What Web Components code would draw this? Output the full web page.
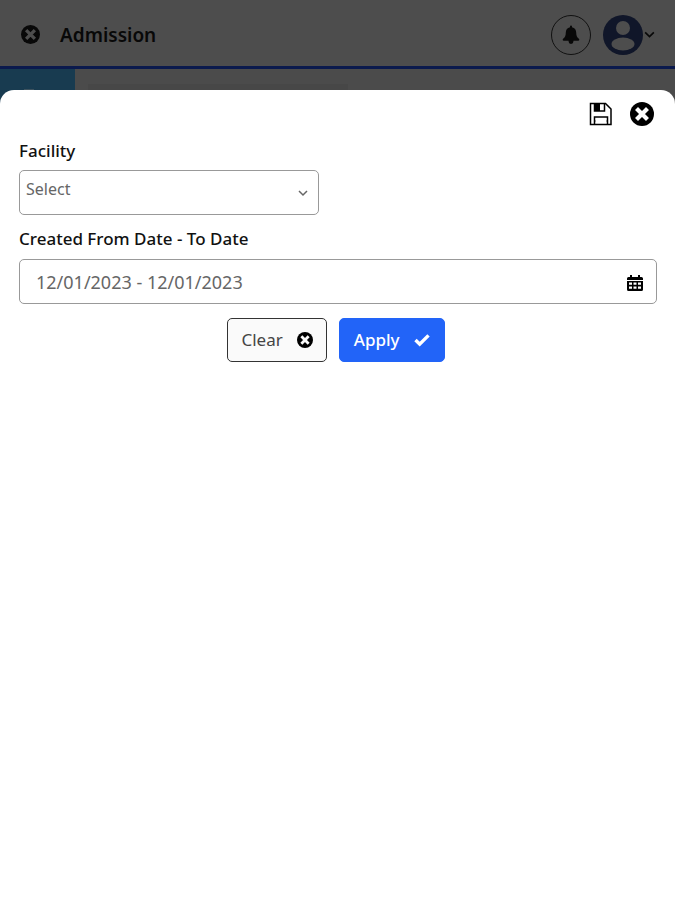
<!DOCTYPE html>
<html lang="en">
<head>
<meta charset="utf-8">
<meta name="viewport" content="width=device-width, initial-scale=1">
<title>Admission</title>
<style>
html, body { height: 100%; }
body { margin: 0; background: #4d4d4d; font-family: "Noto Sans", "Open Sans", sans-serif; font-size: 17px; line-height: 24px; color: #161616; }
</style>
</head>
<body>
<admission-page></admission-page>
<script>
const icons = {
  close: '<svg viewBox="0 0 24 24" aria-hidden="true"><circle cx="12" cy="12" r="12" fill="currentColor"/><path d="M8 8l8 8M16 8l-8 8" fill="none" stroke="var(--mark, #fff)" stroke-width="4.200" stroke-linecap="square"/></svg>',
  bell: '<svg viewBox="0 0 20 20" aria-hidden="true"><path fill="currentColor" d="M9 1.500a1 1 0 0 1 2 0v.7c2.700.5 4.200 2.600 4.200 5.300 0 3.600 1 5.100 2.700 6.300.8.800.4 1.900-.6 1.900H2.700c-1 0-1.400-1.100-.6-1.900C3.800 12.600 4.800 11.100 4.800 7.500 4.800 4.800 6.300 2.700 9 2.200zM7.600 15.500h4.800v1a2.400 2.400 0 0 1-4.800 0z"/></svg>',
  user: '<svg viewBox="0 0 40 40" aria-hidden="true"><circle cx="20" cy="20" r="20" fill="#101629"/><circle cx="20" cy="13" r="7" fill="#4d4d4d"/><ellipse cx="20" cy="29" rx="11.500" ry="6.500" fill="#4d4d4d"/></svg>',
  chevron: '<svg viewBox="0 0 12 12" aria-hidden="true"><path d="M2 4l4 4 4-4" fill="none" stroke="currentColor" stroke-width="1.500"/></svg>',
  save: '<svg viewBox="0 0 24 24" aria-hidden="true" fill="none" stroke="currentColor" stroke-width="1.500"><path d="M1.500 1.500h15l5.500 5.500V22.500H1.500z"/><path d="M5.500 1.500V9h10V1.500M5.500 22.500v-7.500h13V22.500M5.500 19h1M17.500 19h1"/><path d="M5.500 1.500h5.500V9H5.500z" fill="currentColor" stroke="none"/></svg>',
  calendar: '<svg viewBox="0 0 16 16" aria-hidden="true"><path fill="currentColor" fill-rule="evenodd" d="M3 0h2v2h6V0h2v2h1.500A1.500 1.500 0 0 1 16 3.500V5H0V3.500A1.500 1.500 0 0 1 1.500 2H3zM0 6h16v8.500a1.500 1.500 0 0 1-1.500 1.500h-13A1.500 1.500 0 0 1 0 14.500zM2 7.500v2.300h3v-2.300zM6.500 7.500v2.300h3v-2.300zM11 7.500v2.300h3v-2.300zM2 11.500v2.300h3v-2.300zM6.500 11.500v2.300h3v-2.300zM11 11.500v2.300h3v-2.300z"/></svg>',
  check: '<svg viewBox="0 0 16 16" aria-hidden="true"><path d="M1.500 8l4.200 4.200L14.500 3.400" fill="none" stroke="currentColor" stroke-width="3.400"/></svg>'
};
const build = (host, html) => {
  const t = document.createElement('template');
  t.innerHTML = html;
  host.attachShadow({ mode: 'open' }).append(t.content.cloneNode(true));
};

customElements.define('ui-icon', class extends HTMLElement {
  static observedAttributes = ['name'];
  constructor() {
    super();
    build(this, '<style>:host{display:block;flex:none;width:var(--size,16px);height:var(--size,16px)}svg{display:block;width:100%;height:100%}</style><span></span>');
  }
  attributeChangedCallback(_, old, name) { this.shadowRoot.querySelector('span').innerHTML = icons[name] || ''; }
});

const reset = '*{box-sizing:border-box}button{font:inherit;color:inherit;background:none;border:0;padding:0;margin:0;cursor:pointer}';

customElements.define('page-header', class extends HTMLElement {
  constructor() {
    super();
    build(this, `<style>${reset}
      :host{display:block;color:#080808;--mark:#4d4d4d}
      header{display:flex;align-items:center;height:69px;padding:3px 19px 0 21px;border-bottom:3px solid #0b1a4d}
      .close{--size:19px}
      h1{flex:1;margin:0 0 0 20px;font-size:19px;line-height:24px;font-weight:600}
      .bell{display:grid;place-items:center;width:40px;height:40px;border:1px solid #111;border-radius:50%;--size:20px}
      .user{display:flex;align-items:center;margin-left:12px}
      .avatar{--size:40px}.arrow{--size:13px}
    </style>
    <header>
      <button class="close" aria-label="Close page"><ui-icon name="close"></ui-icon></button>
      <h1><slot></slot></h1>
      <button class="bell" aria-label="Notifications"><ui-icon name="bell"></ui-icon></button>
      <button class="user" aria-label="Account"><ui-icon class="avatar" name="user"></ui-icon><ui-icon class="arrow" name="chevron"></ui-icon></button>
    </header>`);
  }
});

customElements.define('action-button', class extends HTMLElement {
  static observedAttributes = ['icon'];
  constructor() {
    super();
    build(this, `<style>${reset}
      :host{display:block}
      button{display:flex;align-items:center;gap:14px;height:44px;padding:0 13px;border:1px solid #333;border-radius:5px;background:#fafafa;color:#444}
      ui-icon{color:#000;--mark:#fafafa}
      :host([primary]) button{padding:0 14px;background:#2264f8;border-color:#2264f8;color:#fff;font-weight:500}
      :host([primary]) ui-icon{color:#fff}
    </style><button type="button"><slot></slot><ui-icon></ui-icon></button>`);
  }
  attributeChangedCallback(_, old, name) { this.shadowRoot.querySelector('ui-icon').setAttribute('name', name); }
});

customElements.define('facility-field', class extends HTMLElement {
  constructor() {
    super();
    build(this, `<style>${reset}
      :host{display:block}
      label{display:block;margin-bottom:7px;font-weight:500;color:#111}
      .box{position:relative;width:47%;min-width:200px}
      select{display:block;appearance:none;width:100%;height:45px;padding:0 32px 8px 6px;border:1px solid #999;border-radius:5px;background:#fff;color:#666;font:inherit;font-size:16px}
      ui-icon{position:absolute;right:10px;top:17px;color:#666;--size:12px;pointer-events:none}
    </style>
    <label for="facility">Facility</label>
    <div class="box"><select id="facility"><option>Select</option></select><ui-icon name="chevron"></ui-icon></div>`);
  }
});

customElements.define('date-field', class extends HTMLElement {
  constructor() {
    super();
    build(this, `<style>${reset}
      :host{display:block}
      label{display:block;margin-bottom:8px;font-weight:500;color:#111}
      .box{display:flex;align-items:center;height:45px;padding:0 13px 0 16px;border:1px solid #999;border-radius:5px;background:#fff}
      input{flex:1;min-width:0;border:0;outline:0;padding:0;background:none;color:#666;font:inherit;font-size:18px}
      button{padding-top:2px;color:#000;--size:16px}
    </style>
    <label for="range">Created From Date - To Date</label>
    <div class="box"><input id="range" type="text" value="12/01/2023 - 12/01/2023"><button type="button" aria-label="Open calendar"><ui-icon name="calendar"></ui-icon></button></div>`);
  }
});

customElements.define('filter-sheet', class extends HTMLElement {
  constructor() {
    super();
    build(this, `<style>${reset}
      :host{display:block;background:#fff;border-radius:14px 14px 0 0;padding:12px 18px 24px 19px}
      .tools{display:flex;justify-content:flex-end;gap:17px;padding-right:3px;--size:24px;color:#000}
      form{display:flex;flex-direction:column;gap:12px;margin-top:13px}
      .actions{display:flex;justify-content:center;gap:12px;margin-top:2px;padding-right:4px}
    </style>
    <div class="tools"><button aria-label="Save filter"><ui-icon name="save"></ui-icon></button><button aria-label="Close filter"><ui-icon name="close"></ui-icon></button></div>
    <form><slot></slot><div class="actions"><slot name="actions"></slot></div></form>`);
  }
});

customElements.define('admission-page', class extends HTMLElement {
  constructor() {
    super();
    build(this, `<style>
      :host{display:flex;flex-direction:column;min-height:100%}
      .content{flex:1;display:flex;flex-direction:column;padding-top:21px;background:
        linear-gradient(#3d525e,#3d525e) 24px 20px / 10px 1px no-repeat,
        linear-gradient(#474747,#474747) 88px 15px / 260px 6px no-repeat,
        linear-gradient(90deg,#183b50 75px,#4b4b4b 75px) top / 100% 40px no-repeat}
      filter-sheet{flex:1}
    </style>
    <page-header>Admission</page-header>
    <div class="content"><filter-sheet role="dialog" aria-label="Filters">
      <facility-field></facility-field>
      <date-field></date-field>
      <action-button slot="actions" icon="close">Clear</action-button>
      <action-button slot="actions" icon="check" primary>Apply</action-button>
    </filter-sheet></div>`);
  }
});
</script>
</body>
</html>
